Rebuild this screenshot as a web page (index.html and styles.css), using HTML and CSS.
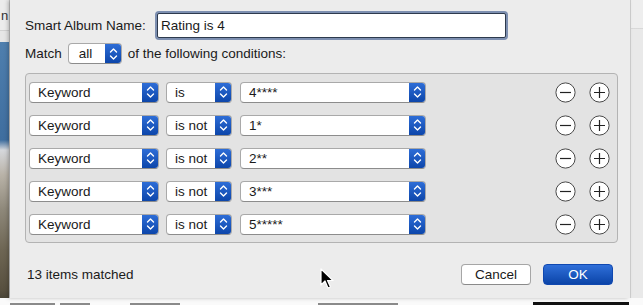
FILE: index.html
```html
<!DOCTYPE html>
<html lang="en">
<head>
  <meta charset="UTF-8">
  <title>Smart Album</title>
  <link rel="stylesheet" href="styles.css">
</head>
<body>
  <div class="screen">
    <div class="side-left"><span class="frag">n</span></div>

    <div class="dialog">
      <div class="name-row">
        <span class="label">Smart Album Name:</span>
        <div class="textfield">Rating is 4</div>
      </div>

      <div class="match-row">
        <span>Match</span>
        <div class="popup popup-all"><span class="popup-text">all</span><span class="stepper"></span></div>
        <span>of the following conditions:</span>
      </div>

      <div class="conditions" id="conditions"></div>

      <div class="footer">
        <span class="count">13 items matched</span>
        <div class="buttons">
          <button class="btn">Cancel</button>
          <button class="btn btn-ok">OK</button>
        </div>
      </div>
    </div>

    <div class="side-right"></div>

    <div class="bottom-strip">
      <span class="smudge s1"></span>
      <span class="smudge s2"></span>
      <span class="smudge s3"></span>
      <span class="smudge s4"></span>
      <span class="dark-block"></span>
    </div>
  </div>

  <svg class="cursor" width="14" height="22" viewBox="0 0 14 22">
    <path d="M1 1 L1 17 L5 13 L8 20 L10.5 19 L7.5 12.5 L13 12.5 Z" fill="#000" stroke="#fff" stroke-width="1.2" stroke-linejoin="round"/>
  </svg>

  <script>
    const rows = [
      ['Keyword', 'is', '4****'],
      ['Keyword', 'is not', '1*'],
      ['Keyword', 'is not', '2**'],
      ['Keyword', 'is not', '3***'],
      ['Keyword', 'is not', '5*****']
    ];

    const chevrons = '<svg width="9" height="14" viewBox="0 0 9 14"><path d="M1.5 5 L4.5 2 L7.5 5 M1.5 9 L4.5 12 L7.5 9" fill="none" stroke="#fff" stroke-width="1.4" stroke-linecap="round" stroke-linejoin="round"/></svg>';

    const minus = '<svg width="21" height="21" viewBox="0 0 21 21"><circle cx="10.5" cy="10.5" r="9.6" fill="#fff" stroke="#4a4a4a" stroke-width="1"/><path d="M5 10.5 H16" stroke="#222" stroke-width="1.2"/></svg>';
    const plus = '<svg width="21" height="21" viewBox="0 0 21 21"><circle cx="10.5" cy="10.5" r="9.6" fill="#fff" stroke="#4a4a4a" stroke-width="1"/><path d="M5 10.5 H16 M10.5 5 V16" stroke="#222" stroke-width="1.2"/></svg>';

    const box = document.getElementById('conditions');
    rows.forEach(([field, op, value]) => {
      const row = document.createElement('div');
      row.className = 'cond-row';
      row.innerHTML =
        '<div class="popup popup-field"><span class="popup-text">' + field + '</span><span class="stepper">' + chevrons + '</span></div>' +
        '<div class="popup popup-op"><span class="popup-text">' + op + '</span><span class="stepper">' + chevrons + '</span></div>' +
        '<div class="popup popup-value"><span class="popup-text">' + value + '</span><span class="stepper">' + chevrons + '</span></div>' +
        '<div class="row-buttons">' + minus + plus + '</div>';
      box.appendChild(row);
    });

    document.querySelector('.popup-all .stepper').innerHTML = chevrons;
  </script>
</body>
</html>
```

FILE: styles.css
```css
body {
  margin: 0;
  width: 643px;
  height: 305px;
  overflow: hidden;
  font-family: "Liberation Sans", Arial, sans-serif;
  font-size: 13.5px;
  color: #1a1a1a;
  background: #f2f2f2;
}
.screen {
  display: grid;
  grid-template-columns: 10px 620px 13px;
  grid-template-rows: 298px 7px;
  width: 643px;
  height: 305px;
}
.side-left {
  background: linear-gradient(to bottom,
    #ececec 0px, #ececec 30px, #bcbcbc 30px, #e6e6e6 31px, #e6e6e6 42px,
    #4f7fae 42px, #3f6e9f 140px, #d6d8dc 150px, #b9b3a8 175px,
    #8e887a 210px, #6e6654 250px, #58503f 290px, #4a4537 298px);
  border-right: 1px solid #c9c9c9;
  overflow: hidden;
}
.frag {
  display: block;
  margin-left: 1px;
  margin-top: 8px;
  font-size: 13px;
  color: #333;
}
.dialog {
  background: #ececec;
  box-shadow: -2px 0 4px rgba(0, 0, 0, 0.25);
  padding: 13px 0 0 15px;
  display: flex;
  flex-direction: column;
  position: relative;
  z-index: 1;
}
.side-right {
  background: linear-gradient(to bottom, #eeeeee 0px, #eeeeee 28px, #c8c8c8 28px, #e9e9e9 29px);
  border-left: 1px solid #d0d0d0;
}
.name-row {
  display: flex;
  align-items: center;
  height: 25px;
}
.label {
  width: 132px;
}
.textfield {
  box-sizing: border-box;
  width: 349px;
  height: 25px;
  background: #fff;
  border: 1px solid #2d3a4d;
  box-shadow: 0 0 0 2px #7d8fb0;
  border-radius: 2px;
  padding: 3px 0 0 3px;
  line-height: 17px;
}
.match-row {
  display: flex;
  align-items: center;
  gap: 6px;
  margin-top: 5px;
  height: 21px;
}
.popup {
  box-sizing: border-box;
  display: flex;
  height: 21px;
  background: #fff;
  border: 1px solid #a9a9a9;
  border-bottom-color: #8c8c8c;
  border-radius: 4px;
  overflow: hidden;
}
.popup-text {
  flex: 1;
  padding-left: 8px;
  line-height: 19px;
  white-space: nowrap;
}
.stepper {
  width: 17px;
  margin: -1px -1px -1px 0;
  background: linear-gradient(to bottom, #2f6fd9, #0b44a8);
  display: flex;
  align-items: center;
  justify-content: center;
  border-radius: 0 4px 4px 0;
}
.popup-all {
  width: 54px;
}
.popup-all .popup-text {
  padding-left: 10px;
}
.conditions {
  box-sizing: border-box;
  width: 593px;
  height: 170px;
  margin-top: 9px;
  background: #e3e3e3;
  border: 1px solid #b3b3b3;
  border-radius: 4px;
  padding: 7px 0 0 3px;
  display: flex;
  flex-direction: column;
  gap: 11px;
}
.cond-row {
  display: flex;
  align-items: center;
  height: 22px;
}
.popup-field {
  width: 130px;
}
.popup-op {
  width: 66px;
  margin-left: 7px;
}
.popup-value {
  width: 186px;
  margin-left: 8px;
}
.row-buttons {
  display: flex;
  gap: 13px;
  margin-left: 129px;
}
.footer {
  display: flex;
  align-items: center;
  justify-content: space-between;
  margin-top: 21px;
  padding-right: 17px;
}
.count {
  margin-left: 2px;
}
.buttons {
  display: flex;
  gap: 12px;
}
.btn {
  box-sizing: border-box;
  width: 70px;
  height: 21px;
  font-family: "Liberation Sans", Arial, sans-serif;
  font-size: 13.5px;
  color: #1a1a1a;
  background: #fff;
  border: 1px solid #a6a6a6;
  border-bottom-color: #8a8a8a;
  border-radius: 4px;
  padding: 0;
}
.btn-ok {
  color: #fff;
  background: linear-gradient(to bottom, #2f6fd9, #0b44a8);
  border-color: #1048b0;
}
.bottom-strip {
  grid-column: 1 / 4;
  background: #fafafa;
  position: relative;
  overflow: hidden;
}
.smudge {
  position: absolute;
  bottom: 0;
  height: 2px;
  background: #8a8a8a;
}
.s1 { left: 10px; width: 45px; }
.s2 { left: 60px; width: 30px; }
.s3 { left: 130px; width: 50px; }
.s4 { left: 318px; width: 80px; }
.dark-block {
  position: absolute;
  left: 533px;
  bottom: 0;
  width: 96px;
  height: 3px;
  background: #111;
}
.cursor {
  position: absolute;
  left: 320px;
  top: 268px;
  z-index: 5;
}
```
